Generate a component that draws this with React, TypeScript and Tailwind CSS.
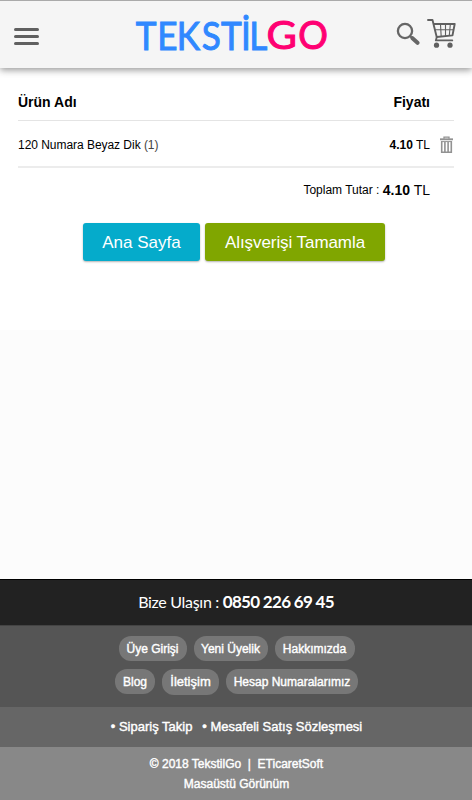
import React from "react";

const Logo = () => (
  <svg width="204" height="67" viewBox="130 1 204 67" className="block" fontFamily="Lato, sans-serif" fontSize="39" aria-label="TEKSTİLGO">
    <text transform="translate(0 49.6) scale(0.9 1)" x="150.8 174.8 196.5 224.3 245.5 267.7 277" y="0" fill="#3088ff" stroke="#3088ff" strokeWidth="1">TEKSTİL</text>
    <text transform="translate(266.5 49.4) scale(1.07 1)" fill="#ff0072" stroke="#ff0072" strokeWidth="1">G</text>
    <text transform="translate(298.3 49.4) scale(0.95 1)" fill="#ff0072" stroke="#ff0072" strokeWidth="1.1">O</text>
  </svg>
);

const SearchIcon = () => (
  <svg width="24" height="24" viewBox="396 22 24 24" className="block" fill="none" stroke="#666" strokeLinecap="round">
    <circle cx="405" cy="31" r="7.1" strokeWidth="2.3" />
    <path d="M410.5 36.5 413 39" strokeWidth="2" />
    <path d="M412.5 38.2 417.5 42.8" strokeWidth="4" />
  </svg>
);

const CartIcon = () => (
  <svg width="29" height="30" viewBox="427 19 29 30" className="block" fill="none" stroke="#606060" strokeLinecap="round" strokeLinejoin="round">
    <path d="M428 20h4.5l4.2 17 15.8-1.6 2.2-11.4h-20.5" strokeWidth="1.9" />
    <path d="M435.5 29.7h18M440.5 24.5l.7 12M445.5 24.5v11.5M450.3 24.5l-1 11" strokeWidth="1.1" />
    <path d="M436.8 37l-1 3.4h16.5" strokeWidth="1.8" />
    <circle cx="436.5" cy="45.2" r="2.6" fill="#606060" stroke="none" />
    <circle cx="450" cy="45.2" r="2.6" fill="#606060" stroke="none" />
  </svg>
);

const TrashIcon = () => (
  <svg width="13" height="18" viewBox="0 0 13 18" className="block" fill="none" stroke="#929292">
    <path d="M4 2.8V1.2h5v1.6" strokeWidth="1.3" />
    <path d="M0 3.3h13" strokeWidth="1.9" />
    <path d="M1.7 5.3v10.9h9.6v-10.9M4.9 6v10M8.1 6v10" strokeWidth="1.6" />
    <path d="M1 5.6h11" strokeWidth="1" />
  </svg>
);

const Pill = ({ children, className }: { children: React.ReactNode; className: string }) => (
  <a className={`flex items-center justify-center whitespace-nowrap rounded-[12px] bg-[#777] ${className}`}>{children}</a>
);

export default function App() {
  return (
    <div className="flex h-[800px] w-[472px] flex-col overflow-hidden bg-[#fcfcfc] font-['Liberation_Sans',Arial,sans-serif] text-black">
      <header className="z-10 flex h-[68px] shrink-0 border-t border-[#aaa] bg-[#f5f5f5] shadow-[0_2px_7px_rgba(0,0,0,0.42)]">
        <div className="ml-[14px] mt-[27px] flex h-[17px] w-[25px] flex-col justify-between">
          <span className="h-[3px] rounded-full bg-[#606060]" />
          <span className="h-[3px] rounded-full bg-[#606060]" />
          <span className="h-[3px] rounded-full bg-[#606060]" />
        </div>
        <div className="ml-[91px]"><Logo /></div>
        <div className="ml-[62px] mt-[21px]"><SearchIcon /></div>
        <div className="ml-[7px] mt-[18px]"><CartIcon /></div>
      </header>

      <main className="h-[262px] shrink-0 bg-white px-[18px]">
        <div className="flex h-[53px] items-center justify-between border-b border-[#e4e4e4] pr-[24px] pt-[16px] text-[14px] font-bold">
          <span>Ürün Adı</span><span>Fiyatı</span>
        </div>
        <div className="flex h-[47px] items-center border-b-2 border-[#ececec] pt-[3px] text-[12px]">
          <span className="tracking-[-0.04px]">120 Numara Beyaz Dik <span className="text-[#444]">(1)</span></span>
          <span className="ml-auto mr-[10px]"><b>4.10</b> TL</span>
          <span className="mr-[1px]"><TrashIcon /></span>
        </div>
        <div className="flex h-[43px] items-center justify-end whitespace-pre pr-[24px] pt-[1px] text-[12px]">
          Toplam Tutar : <span className="text-[14px]"><b>4.10</b> TL</span>
        </div>
        <div className="mt-[12px] flex justify-center gap-[5px] pr-[4px] text-[17px] text-white [text-shadow:0_1px_2px_rgba(0,0,0,0.45)]">
          <button className="h-[38px] w-[117px] rounded-[3px] bg-[#05abcb] pt-[2px] shadow-[0_1px_2px_rgba(0,0,0,0.3)]">Ana Sayfa</button>
          <button className="h-[38px] w-[180px] rounded-[3px] bg-[#80a600] pt-[2px] tracking-[-0.07px] shadow-[0_1px_2px_rgba(0,0,0,0.3)]">Alışverişi Tamamla</button>
        </div>
      </main>

      <footer className="mt-auto shrink-0 text-white">
        <div className="flex h-[46px] items-center justify-center whitespace-pre border-t border-black bg-[#222] pb-[2px] font-['Lato',sans-serif] text-[16px] tracking-[-0.3px]">
          Bize Ulaşın : <b className="text-[17px] tracking-[-0.7px]">0850 226 69 45</b>
        </div>
        <div className="flex h-[82px] flex-col items-center gap-[8px] border-t border-[#444] bg-[#555] pl-[1px] pt-[10px] text-[12px] [-webkit-text-stroke:0.4px_white]">
          <div className="flex gap-[7px]">
            <Pill className="h-[25px] w-[68px]">Üye Girişi</Pill>
            <Pill className="h-[25px] w-[74px]">Yeni Üyelik</Pill>
            <Pill className="h-[25px] w-[80px]">Hakkımızda</Pill>
          </div>
          <div className="flex items-start gap-[7px]">
            <Pill className="h-[25px] w-[40px]">Blog</Pill>
            <Pill className="h-[26px] w-[57px] text-[13px]">İletişim</Pill>
            <Pill className="h-[25px] w-[132px]">Hesap Numaralarımız</Pill>
          </div>
        </div>
        <div className="flex h-[40px] items-center justify-center gap-[10px] bg-[#666] pb-[1px] pl-[1px] text-[13px] [-webkit-text-stroke:0.4px_white]">
          <span>• Sipariş Takip</span><span>• Mesafeli Satış Sözleşmesi</span>
        </div>
        <div className="flex h-[53px] flex-col items-center bg-[#888] pl-[1px] pt-[7px] text-[12px] leading-[20px] [-webkit-text-stroke:0.4px_white]">
          <span className="whitespace-pre">© 2018 TekstilGo  |  ETicaretSoft</span>
          <span>Masaüstü Görünüm</span>
        </div>
      </footer>
    </div>
  );
}
